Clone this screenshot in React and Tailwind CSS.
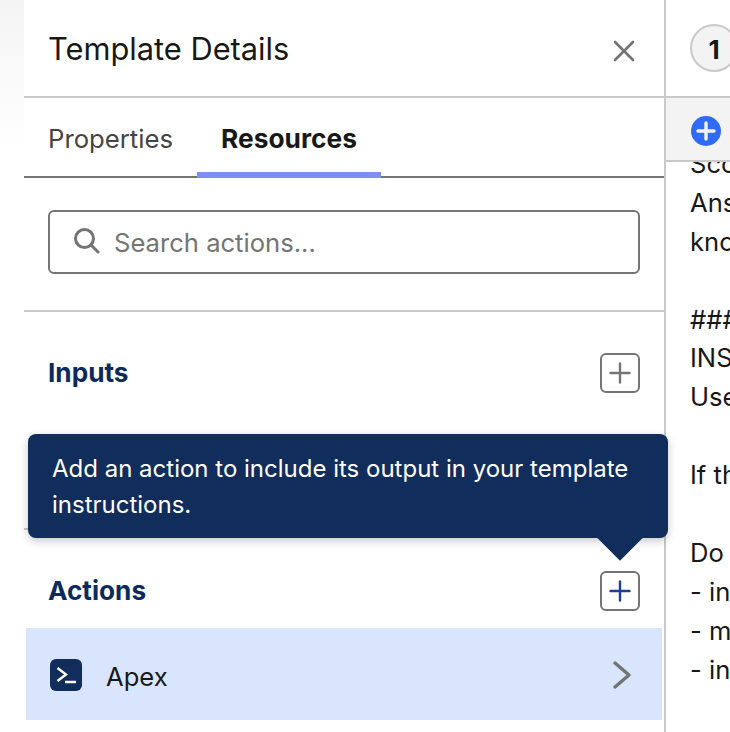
const EDITOR_LINES = [
  'Scope',
  'Answer the question',
  'knowledge',
  '',
  '### Instructions',
  'INSTRUCTIONS',
  'Use the',
  '',
  'If the',
  '',
  'Do not',
  '- include',
  '- make',
  '- include',
]

function PlusButton({ color = '#747474' }) {
  return (
    <button className="w-10 h-10 rounded-md border-2 border-[#747474] bg-white flex items-center justify-center">
      <svg width="22" height="22" viewBox="0 0 22 22" fill="none" stroke={color} strokeWidth="2.4" strokeLinecap="round">
        <path d="M11 1.5v19M1.5 11h19" />
      </svg>
    </button>
  )
}

export default function App() {
  return (
    <div className="flex h-[732px] w-[730px] overflow-hidden bg-white font-['Inter',sans-serif] relative">
      {/* page behind the panel */}
      <div className="w-6 h-[150px] shrink-0 bg-gradient-to-b from-[#f4f4f4] to-white" />

      {/* Template details panel */}
      <div className="w-[640px] shrink-0 flex flex-col">
        <div className="h-[98px] border-b-2 border-[#c9c9c9] pl-6 pr-[29px] flex items-center justify-between">
          <h2 className="text-[30.8px] leading-none text-[#181818] font-normal mt-[2px]">Template Details</h2>
          <svg width="22" height="22" viewBox="0 0 22 22" fill="none" stroke="#747474" strokeWidth="2.6" strokeLinecap="round" className="mt-[6px]">
            <path d="M2 2l18 18M20 2L2 20" />
          </svg>
        </div>

        <div className="h-20 border-b-2 border-[#747474] flex">
          <div className="pl-6 pr-6 pt-[4px] flex items-center text-[25.7px] text-[#444444]">Properties</div>
          <div className="w-[184px] h-20 border-b-[6px] border-[#7f8ef5] flex items-center justify-center text-[26.3px] font-bold text-[#181818] pt-[8px]">
            Resources
          </div>
        </div>

        <div className="h-[134px] border-b-2 border-[#c9c9c9] px-6 pt-8">
          <div className="h-16 rounded-md border-2 border-[#747474] flex items-center pl-[23px] gap-[14px]">
            <svg width="27" height="27" viewBox="0 0 27 27" fill="none" stroke="#747474" strokeWidth="3" strokeLinecap="round" className="-mt-1">
              <circle cx="11.5" cy="11.5" r="9" />
              <path d="M18.5 18.5l6.5 6.5" />
            </svg>
            <span className="text-[25.6px] text-[#747474] pt-[2px]">Search actions...</span>
          </div>
        </div>

        <div className="h-[218px] border-b-2 border-[#c9c9c9] px-6 pt-[41px] flex items-start justify-between">
          <h3 className="text-[26.2px] leading-10 font-bold text-[#0d2a5c]">Inputs</h3>
          <PlusButton />
        </div>

        <div className="px-6 pt-[41px] flex items-start justify-between">
          <h3 className="text-[26.2px] leading-10 font-bold text-[#0d2a5c]">Actions</h3>
          <PlusButton color="#1b3f95" />
        </div>

        <div className="mt-[17px] ml-0.5 w-[636px] h-[92px] bg-[#d9e5fc] pl-6 pr-[30px] flex items-center">
          <div className="w-8 h-8 mt-[2px] rounded-md bg-[#112d5c] flex items-center justify-center">
            <svg width="24" height="24" viewBox="0 0 24 24" fill="none" stroke="white" strokeWidth="2.4">
              <path d="M3.5 5l8.5 6.5-8.5 6.5M11 19h11" />
            </svg>
          </div>
          <span className="ml-6 mt-[6px] text-[25.6px] text-[#181818]">Apex</span>
          <svg width="20" height="28" viewBox="0 0 20 28" fill="none" stroke="#747474" strokeWidth="3.4" strokeLinecap="round" strokeLinejoin="round" className="ml-auto mt-[2px]">
            <path d="M3 2l14 12L3 26" />
          </svg>
        </div>
      </div>

      {/* Editor column, cut off by the window */}
      <div className="flex-1 min-w-0 border-l-2 border-[#c9c9c9] flex flex-col">
        <div className="h-[98px] shrink-0 border-b-2 border-[#c9c9c9] pt-6 pl-6">
          <div className="w-12 h-12 pt-[3px] rounded-full border-2 border-[#c9c9c9] bg-[#f3f3f3] flex items-center justify-center text-[26px] font-bold text-[#181818]">
            1
          </div>
        </div>
        <div className="h-16 shrink-0 border-b-2 border-[#c9c9c9] bg-[#f3f3f3] pl-[25px] pt-1 flex items-center">
          <svg width="30" height="30" viewBox="0 0 30 30" className="shrink-0">
            <circle cx="15" cy="15" r="15" fill="#2f6bf6" />
            <path d="M15 7v16M7 15h16" stroke="#f3f3f3" strokeWidth="3.4" strokeLinecap="round" />
          </svg>
        </div>
        <div className="flex-1 overflow-hidden">
          <div className="-mt-[17px] pl-6 whitespace-nowrap text-[25.6px] leading-[38.9px] text-[#181818]">
            {EDITOR_LINES.map((line, i) => (
              <div key={i} className="h-[38.9px]">{line}</div>
            ))}
          </div>
        </div>
      </div>

      {/* Tooltip over the actions button */}
      <div className="absolute left-7 top-[434px] w-[640px] h-[104px] rounded-lg bg-[#112d5c] px-6 py-[17px] text-[24px] leading-[36px] text-white shadow-[0_3px_8px_rgba(0,0,0,0.22)]">
        Add an action to include its output in your template instructions.
        <div className="absolute left-[576px] -bottom-[16px] w-8 h-8 rotate-45 bg-[#112d5c]" />
      </div>
    </div>
  )
}
